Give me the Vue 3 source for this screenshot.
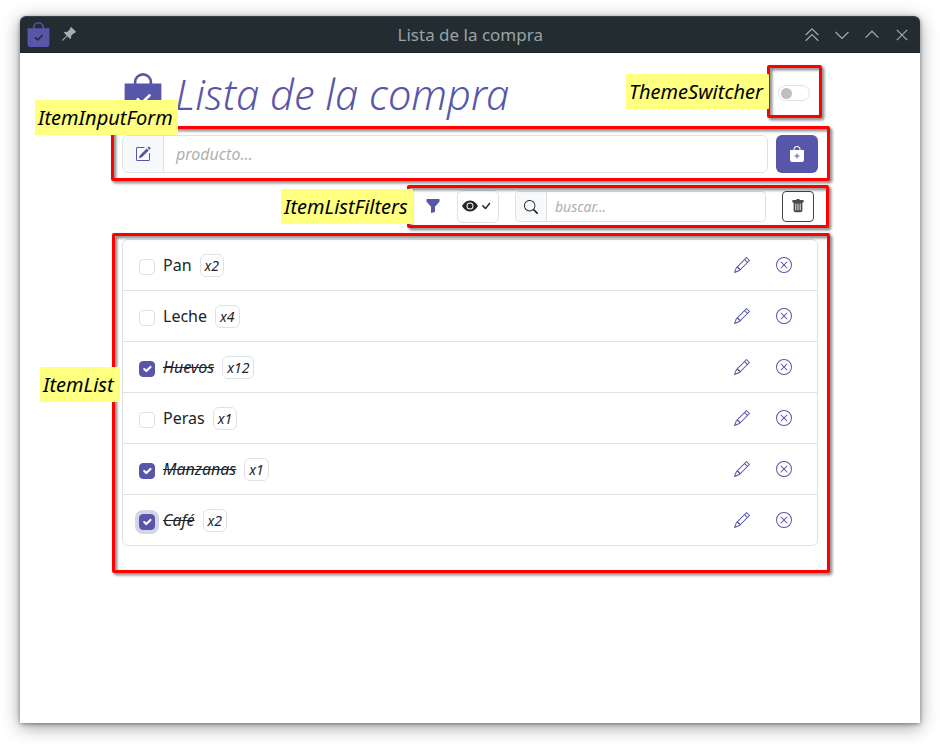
<script setup>
import { h, ref } from 'vue'

const BAG = 'M10.5 3.5a2.5 2.5 0 0 0-5 0V4h5v-.5zm1 0V4H15v10a2 2 0 0 1-2 2H3a2 2 0 0 1-2-2V4h3.5v-.5a3.5 3.5 0 1 1 7 0z'
const icons = {
  bagCheck: BAG + 'm-.646 5.354a.5.5 0 0 0-.708-.708L7.5 10.793 6.354 9.646a.5.5 0 1 0-.708.708l1.5 1.5a.5.5 0 0 0 .708 0l3-3z',
  bagPlus: BAG + 'M8.5 8a.5.5 0 0 0-1 0v1.5H6a.5.5 0 0 0 0 1h1.5V12a.5.5 0 0 0 1 0v-1.5H10a.5.5 0 0 0 0-1H8.5V8z',
  pencil: 'M12.146.146a.5.5 0 0 1 .708 0l3 3a.5.5 0 0 1 0 .708l-10 10a.5.5 0 0 1-.168.11l-5 2a.5.5 0 0 1-.65-.65l2-5a.5.5 0 0 1 .11-.168l10-10zM11.207 2.5 13.5 4.793 14.793 3.5 12.5 1.207 11.207 2.5zm1.586 3L10.5 3.207 4 9.707V10h.5a.5.5 0 0 1 .5.5v.5h.5a.5.5 0 0 1 .5.5v.5h.293l6.5-6.5zm-9.761 5.175-.106.106-1.528 3.821 3.821-1.528.106-.106A.5.5 0 0 1 5 12.5V12h-.5a.5.5 0 0 1-.5-.5V11h-.5a.5.5 0 0 1-.468-.325z',
  pencilSquare: 'M15.502 1.94a.5.5 0 0 1 0 .706L14.459 3.69l-2-2L13.502.646a.5.5 0 0 1 .707 0l1.293 1.293zm-1.75 2.456-2-2L4.939 9.21a.5.5 0 0 0-.121.196l-.805 2.414a.25.25 0 0 0 .316.316l2.414-.805a.5.5 0 0 0 .196-.12l6.813-6.814zM1 13.5A1.5 1.5 0 0 0 2.5 15h11a1.5 1.5 0 0 0 1.5-1.5v-6a.5.5 0 0 0-1 0v6a.5.5 0 0 1-.5.5h-11a.5.5 0 0 1-.5-.5v-11a.5.5 0 0 1 .5-.5H9a.5.5 0 0 0 0-1H2.5A1.5 1.5 0 0 0 1 2.5v11z',
  xCircle: 'M8 15A7 7 0 1 1 8 1a7 7 0 0 1 0 14zm0 1A8 8 0 1 0 8 0a8 8 0 0 0 0 16zM4.646 4.646a.5.5 0 0 1 .708 0L8 7.293l2.646-2.647a.5.5 0 0 1 .708.708L8.707 8l2.647 2.646a.5.5 0 0 1-.708.708L8 8.707l-2.646 2.647a.5.5 0 0 1-.708-.708L7.293 8 4.646 5.354a.5.5 0 0 1 0-.708z',
  funnel: 'M1.5 1.5A.5.5 0 0 1 2 1h12a.5.5 0 0 1 .5.5v2a.5.5 0 0 1-.128.334L10 8.692V13.5a.5.5 0 0 1-.342.474l-3 1A.5.5 0 0 1 6 14.5V8.692L1.628 3.834A.5.5 0 0 1 1.5 3.5v-2z',
  eye: 'M10.5 8a2.5 2.5 0 1 1-5 0 2.5 2.5 0 0 1 5 0zM0 8s3-5.5 8-5.5S16 8 16 8s-3 5.5-8 5.5S0 8 0 8zm8 3.5a3.5 3.5 0 1 0 0-7 3.5 3.5 0 0 0 0 7z',
  check: 'M10.97 4.97a.75.75 0 0 1 1.07 1.05l-3.99 4.99a.75.75 0 0 1-1.08.02L4.324 8.384a.75.75 0 1 1 1.06-1.06l2.094 2.093 3.473-4.425a.267.267 0 0 1 .02-.022z',
  search: 'M11.742 10.344a6.5 6.5 0 1 0-1.397 1.398h-.001c.03.04.062.078.098.115l3.85 3.85a1 1 0 0 0 1.415-1.414l-3.85-3.85a1.007 1.007 0 0 0-.115-.1zM12 6.5a5.5 5.5 0 1 1-11 0 5.5 5.5 0 0 1 11 0z',
  trash: 'M2.5 1a1 1 0 0 0-1 1v1a1 1 0 0 0 1 1H3v9a2 2 0 0 0 2 2h6a2 2 0 0 0 2-2V4h.5a1 1 0 0 0 1-1V2a1 1 0 0 0-1-1H10a1 1 0 0 0-1-1H7a1 1 0 0 0-1 1H2.5zm3 4a.5.5 0 0 1 .5.5v7a.5.5 0 0 1-1 0v-7a.5.5 0 0 1 .5-.5zM8 5a.5.5 0 0 1 .5.5v7a.5.5 0 0 1-1 0v-7A.5.5 0 0 1 8 5zm3 .5v7a.5.5 0 0 1-1 0v-7a.5.5 0 0 1 1 0z',
}

const Icon = (props) =>
  h('svg', { width: props.size, height: props.size, viewBox: '0 0 16 16', fill: 'currentColor' }, [
    h('path', { d: icons[props.name], 'fill-rule': 'evenodd' }),
  ])
Icon.props = ['name', 'size']

const items = ref([
  { name: 'Pan', qty: 2, done: false },
  { name: 'Leche', qty: 4, done: false },
  { name: 'Huevos', qty: 12, done: true },
  { name: 'Peras', qty: 1, done: false },
  { name: 'Manzanas', qty: 1, done: true },
  { name: 'Café', qty: 2, done: true, focused: true },
])
</script>

<template>
  <div class="desktop">
    <div class="window">
      <header class="titlebar">
        <div class="tb-left">
          <Icon name="bagCheck" size="25" class="app-icon" />
          <svg class="pin" width="14" height="14" viewBox="0 0 14 14">
            <path d="M9.2 0 14 4.8 12.8 6.2 12 5.9 9 8.9 9.2 10.9 8.1 12 5.2 9.3 0.9 13.8H0.1V13L4.6 8.6 1.9 5.8 3 4.7 5.1 4.9 8.1 1.9 7.8 1.2Z" fill="#a5adae" />
          </svg>
        </div>
        <div class="tb-title">Lista de la compra</div>
        <div class="tb-right">
          <svg width="14" height="14" viewBox="0 0 14 14"><path d="M.7 7 7 .9 13.3 7M.7 12.7 7 6.6l6.3 6.1" /></svg>
          <svg width="14" height="14" viewBox="0 0 14 14"><path d="M.5 4 7 10.4 13.5 4" /></svg>
          <svg width="14" height="14" viewBox="0 0 14 14"><path d="M.5 9.6 7 3.2l6.5 6.4" /></svg>
          <svg width="14" height="14" viewBox="0 0 14 14"><path d="m1.8 1.8 10.4 10.4M12.2 1.8 1.8 12.2" /></svg>
        </div>
      </header>

      <main class="container">
        <div class="head">
          <Icon name="bagCheck" size="42" class="logo" />
          <h1>Lista de la compra</h1>
          <span class="switch"><span class="knob"></span></span>
        </div>

        <div class="form">
          <div class="group">
            <span class="addon"><Icon name="pencilSquare" size="16" /></span>
            <span class="field">producto...</span>
          </div>
          <button class="add"><Icon name="bagPlus" size="16" /></button>
        </div>

        <div class="filters">
          <Icon name="funnel" size="16" class="funnel" />
          <button class="view"><Icon name="eye" size="16" /><Icon name="check" size="16" /></button>
          <div class="group small">
            <span class="addon"><Icon name="search" size="14" /></span>
            <span class="field">buscar...</span>
          </div>
          <button class="trash"><Icon name="trash" size="14" /></button>
        </div>

        <ul class="list">
          <li v-for="item in items" :key="item.name" class="item">
            <span class="box" :class="{ on: item.done, focused: item.focused }">
              <svg v-if="item.done" width="14" height="14" viewBox="0 0 20 20"><path d="m6 10 3 3 6-6" fill="none" stroke="#fff" stroke-width="3" stroke-linecap="round" stroke-linejoin="round" /></svg>
            </span>
            <span class="name" :class="{ done: item.done }">{{ item.name }}</span>
            <span class="badge">x{{ item.qty }}</span>
            <span class="actions">
              <Icon name="pencil" size="16" />
              <Icon name="xCircle" size="16" />
            </span>
          </li>
        </ul>
      </main>
    </div>

    <div class="frame frame-theme"></div>
    <div class="frame frame-form"></div>
    <div class="frame frame-filters"></div>
    <div class="frame frame-list"></div>
    <div class="note note-theme">ThemeSwitcher</div>
    <div class="note note-form">ItemInputForm</div>
    <div class="note note-filters">ItemListFilters</div>
    <div class="note note-list">ItemList</div>
  </div>
</template>

<style>
body {
  margin: 0;
  background: #fff;
}
</style>

<style scoped>
* {
  box-sizing: border-box;
}
.desktop {
  position: relative;
  width: 940px;
  height: 747px;
  padding: 16px 20px 24px;
  overflow: hidden;
  font-family: 'Noto Sans', sans-serif;
  font-size: 16px;
  color: #212529;
}
svg {
  display: block;
  flex: none;
}
.window {
  height: 707px;
  background: #fff;
  border-radius: 6px 6px 0 0;
  box-shadow: 0 4px 18px rgba(0, 0, 0, 0.38), 0 1px 4px rgba(0, 0, 0, 0.4);
}
.titlebar {
  display: grid;
  grid-template-columns: 1fr auto 1fr;
  align-items: center;
  height: 37px;
  padding: 0 11px 0 5.5px;
  background: #232d31;
  border-top: 1px solid #35424a;
  border-bottom: 1px solid #1b2430;
  border-radius: 6px 6px 0 0;
}
.tb-left {
  display: flex;
  align-items: center;
  gap: 11px;
}
.pin {
  margin-top: -2px;
}
.app-icon {
  color: #5856a9;
  margin-top: -1px;
}
.tb-title {
  font-size: 17px;
  line-height: 24px;
  color: #98a3a5;
  padding-top: 1px;
  margin-right: -6px;
}
.tb-right {
  display: flex;
  justify-content: flex-end;
  gap: 16px;
}
.tb-right path {
  fill: none;
  stroke: #a4abac;
  stroke-width: 1.2;
}
.container {
  width: 696px;
  margin: 0 auto;
  padding-top: 20px;
}
.head {
  display: flex;
  align-items: center;
  height: 42px;
  color: #5856a9;
}
h1 {
  margin: 0 0 0 11px;
  font-size: 41.6px;
  line-height: 50px;
  font-style: italic;
  font-weight: 300;
  white-space: nowrap;
}
.switch {
  width: 32px;
  height: 16px;
  margin: 0 8px 2px auto;
  padding: 2px;
  border: 1px solid #dee2e6;
  border-radius: 8px;
}
.knob {
  display: block;
  width: 11px;
  height: 11px;
  border-radius: 50%;
  background: #bfbfbf;
}
.form {
  display: flex;
  gap: 8px;
  height: 38px;
  margin-top: 20px;
}
.group {
  display: flex;
  flex: 1;
  border: 1px solid #dee2e6;
  border-radius: 6px;
  overflow: hidden;
}
.addon {
  display: flex;
  align-items: center;
  justify-content: center;
  width: 41px;
  background: #f8f9fa;
  border-right: 1px solid #dee2e6;
  color: #5856a9;
}
.field {
  padding-left: 12px;
  line-height: 36px;
  font-style: italic;
  color: #b0b0b0;
}
button {
  display: flex;
  align-items: center;
  justify-content: center;
  padding: 0;
  font: inherit;
  background: #fff;
  border-radius: 6px;
}
.add {
  width: 42px;
  border: 0;
  background: #5856a9;
  color: #fff;
}
.filters {
  display: flex;
  align-items: center;
  height: 33px;
  margin-top: 17px;
  padding: 0 4px 0 303px;
}
.funnel {
  color: #5856a9;
  margin-top: -1px;
}
.view {
  width: 42px;
  height: 33px;
  margin: 0 16px;
  border: 1px solid #dee2e6;
  color: #212529;
}
.view svg {
  margin-top: -1px;
}
.small {
  height: 31px;
  border-radius: 4px;
}
.small .addon {
  width: 31px;
  color: #212529;
}
.small .field {
  padding-left: 8px;
  font-size: 14px;
  line-height: 29px;
}
.trash {
  width: 32px;
  height: 31px;
  margin-left: 16px;
  border: 1px solid #444;
  border-radius: 4px;
  color: #4a4a4a;
}
.trash svg {
  margin-top: -1px;
}
.list {
  margin: 16px 0 0;
  padding: 0;
  list-style: none;
  border: 1px solid #dee2e6;
  border-radius: 6px;
}
.item {
  display: flex;
  align-items: center;
  height: 51px;
  padding: 0 25px 0 16px;
}
.item:first-child {
  height: 50px;
}
.item + .item {
  border-top: 1px solid #dee2e6;
}
.box {
  display: flex;
  align-items: center;
  justify-content: center;
  width: 16px;
  height: 16px;
  margin: 4px 8px 0 0;
  border: 1px solid #dee2e6;
  border-radius: 4px;
}
.box.on {
  background: #5856a9;
  border-color: #5856a9;
}
.box.focused {
  box-shadow: 0 0 0 4px #d5d5ea;
}
.name {
  line-height: 24px;
}
.name.done {
  font-style: italic;
  text-decoration: line-through;
}
.badge {
  margin: 1px 0 0 8px;
  padding: 0 4px;
  border: 1px solid #dee2e6;
  border-radius: 6px;
  font-size: 14px;
  line-height: 21px;
  font-style: italic;
}
.actions {
  display: flex;
  gap: 26px;
  margin-left: auto;
  color: #5856a9;
}
.frame {
  position: absolute;
  border: 3px solid #f00;
  border-radius: 2px;
  filter: drop-shadow(2px 2px 1.5px rgba(0, 0, 0, 0.55));
}
.frame-theme {
  left: 767px;
  top: 65px;
  width: 55px;
  height: 53px;
}
.frame-form {
  left: 111px;
  top: 126px;
  width: 719px;
  height: 55px;
}
.frame-filters {
  left: 407px;
  top: 185px;
  width: 422px;
  height: 43px;
}
.frame-list {
  left: 112px;
  top: 233px;
  width: 718px;
  height: 340px;
}
.note {
  position: absolute;
  height: 35px;
  padding-left: 3px;
  background: #ffff80;
  border-radius: 1px;
  color: #000;
  font-size: 20px;
  line-height: 35px;
  font-style: italic;
  white-space: nowrap;
}
.note-theme {
  left: 626px;
  top: 74px;
  width: 143px;
}
.note-form {
  left: 35px;
  top: 100px;
  width: 143px;
}
.note-filters {
  left: 281px;
  top: 189px;
  width: 132px;
}
.note-list {
  left: 40px;
  top: 367px;
  width: 80px;
}
</style>
